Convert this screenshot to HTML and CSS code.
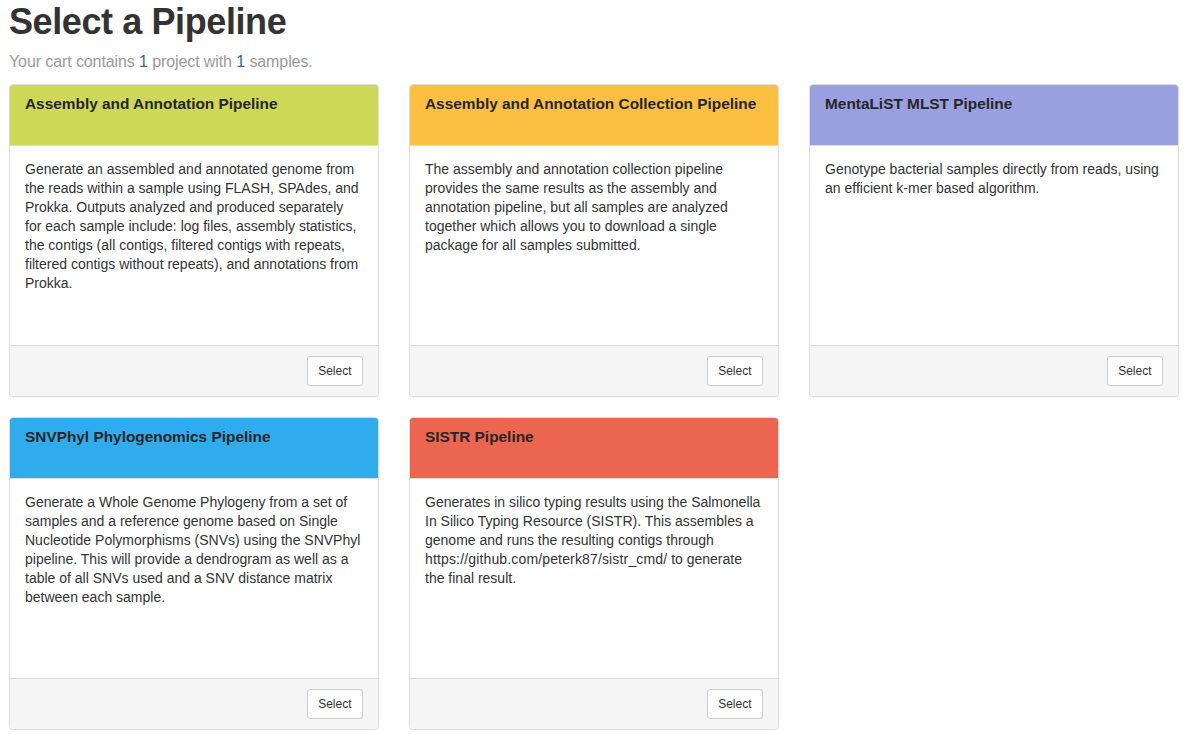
FILE: index.html
```html
<!DOCTYPE html>
<html>
<head>
<meta charset="utf-8">
<title>Select a Pipeline</title>
<link rel="stylesheet" href="styles.css">
</head>
<body>
<div class="page">
  <h1 class="title">Select a Pipeline</h1>
  <p class="lead">Your cart contains <span class="num">1</span> project with <span class="num">1</span> samples.</p>
  <div class="grid">
    <div class="card">
      <div class="card-head green"><h3>Assembly and Annotation Pipeline</h3></div>
      <div class="card-body">Generate an assembled and annotated genome from the reads within a sample using FLASH, SPAdes, and Prokka. Outputs analyzed and produced separately for each sample include: log files, assembly statistics, the contigs (all contigs, filtered contigs with repeats, filtered contigs without repeats), and annotations from Prokka.</div>
      <div class="card-foot"><button class="btn">Select</button></div>
    </div>
    <div class="card">
      <div class="card-head orange"><h3>Assembly and Annotation Collection Pipeline</h3></div>
      <div class="card-body">The assembly and annotation collection pipeline provides the same results as the assembly and annotation pipeline, but all samples are analyzed together which allows you to download a single package for all samples submitted.</div>
      <div class="card-foot"><button class="btn">Select</button></div>
    </div>
    <div class="card">
      <div class="card-head purple"><h3>MentaLiST MLST Pipeline</h3></div>
      <div class="card-body">Genotype bacterial samples directly from reads, using an efficient k-mer based algorithm.</div>
      <div class="card-foot"><button class="btn">Select</button></div>
    </div>
    <div class="card">
      <div class="card-head blue"><h3>SNVPhyl Phylogenomics Pipeline</h3></div>
      <div class="card-body">Generate a Whole Genome Phylogeny from a set of samples and a reference genome based on Single Nucleotide Polymorphisms (SNVs) using the SNVPhyl pipeline. This will provide a dendrogram as well as a table of all SNVs used and a SNV distance matrix between each sample.</div>
      <div class="card-foot"><button class="btn">Select</button></div>
    </div>
    <div class="card">
      <div class="card-head red"><h3>SISTR Pipeline</h3></div>
      <div class="card-body">Generates in silico typing results using the Salmonella In Silico Typing Resource (SISTR). This assembles a genome and runs the resulting contigs through <span class="url">https://github.com/peterk87/sistr_cmd/</span> to generate the final result.</div>
      <div class="card-foot"><button class="btn">Select</button></div>
    </div>
  </div>
</div>
</body>
</html>
```
FILE: styles.css
```css
* { box-sizing: border-box; }
html, body { margin: 0; padding: 0; background: #fff; }
body {
  font-family: "Liberation Sans", Arial, sans-serif;
  font-size: 14px;
  color: #333;
}
.page {
  width: 1179px;
  padding: 0 0 0 9px;
}
.title {
  margin: 0;
  padding-top: 2px;
  font-size: 36px;
  font-weight: 700;
  line-height: 40px;
  color: #333;
  letter-spacing: -0.4px;
}
.lead {
  margin: 10px 0 0 0;
  font-size: 16px;
  line-height: 20px;
  color: #9a9a9a;
  letter-spacing: -0.1px;
}
.lead .num { color: #2e6b97; }
.grid {
  margin-top: 12px;
  display: grid;
  grid-template-columns: repeat(3, 369.5px);
  column-gap: 30.5px;
  row-gap: 20px;
}
.card {
  border: 1px solid #ddd;
  border-radius: 4px;
  background: #fff;
  box-shadow: 0 1px 1px rgba(0,0,0,0.05);
  overflow: hidden;
}
.card-head {
  height: 60px;
  padding: 10px 15px 0 15px;
}
.card-head h3 {
  margin: 0;
  font-size: 15.4px;
  font-weight: 700;
  line-height: 18px;
  color: #262626;
  white-space: nowrap;
}
.green { background: #cdd956; }
.orange { background: #fcbf41; }
.purple { background: #9a9fdf; }
.blue { background: #2eacee; }
.red { background: #ec664f; }
.card-body {
  height: 200px;
  padding: 14px 15px 16px 15px;
  border-top: 1px solid #ddd;
  font-size: 14px;
  line-height: 19px;
  color: #333;
}
.url { letter-spacing: 0.15px; }
.card-foot {
  display: flex;
  justify-content: flex-end;
  padding: 10px 15px;
  background: #f5f5f5;
  border-top: 1px solid #ddd;
}
.btn {
  font-family: "Liberation Sans", Arial, sans-serif;
  font-size: 12px;
  line-height: 18px;
  height: 30px;
  padding: 5px 10px;
  background: #fff;
  color: #333;
  border: 1px solid #ccc;
  border-radius: 3px;
}
```
